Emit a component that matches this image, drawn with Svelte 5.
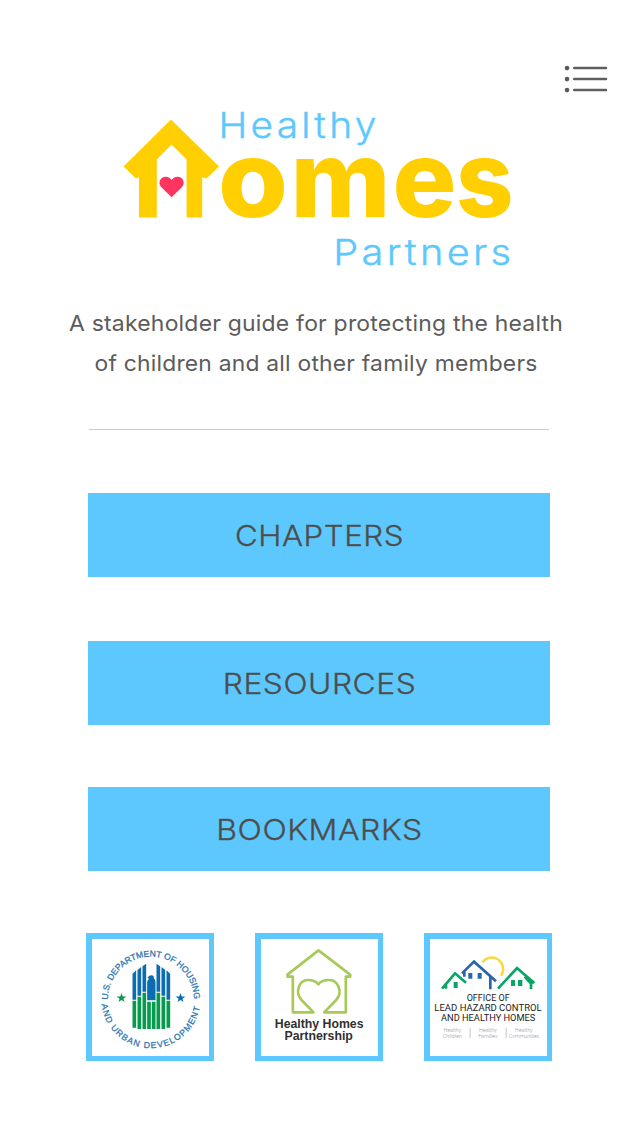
<script>
  const actions = [
    { label: 'CHAPTERS', width: 165 },
    { label: 'RESOURCES', width: 189.5 },
    { label: 'BOOKMARKS', width: 202.5 }
  ];
  const starPoints = '0,-15 3.6,-4.8 14.5,-4.6 5.8,1.9 9,12.3 0,6 -9,12.3 -5.8,1.9 -14.5,-4.6 -3.6,-4.8';
</script>

<main class="screen">
  <header class="topbar">
    <button class="menu" aria-label="Menu">
      <svg width="44" height="30" viewBox="0 0 44 30">
        {#each [4.1, 15.1, 26.1] as y}
          <circle cx="3" cy={y} r="2.3" fill="#5a5a5a" />
          <path d="M10.2 {y}H42" stroke="#5f5f5f" stroke-width="2.5" stroke-linecap="round" />
        {/each}
      </svg>
    </button>
  </header>

  <h1 class="logo">
    <svg width="400" height="180" viewBox="120 100 400 180">
      <g fill="#5dc8fd" class="thin" font-size="36">
        <text x="218.5" y="138" textLength="161" lengthAdjust="spacingAndGlyphs">Healthy</text>
        <text x="333.3" y="265" textLength="181" lengthAdjust="spacingAndGlyphs">Partners</text>
      </g>
      <path
        fill="#ffcf01"
        d="M171 119.5 219 166.5 206.5 178.6 202.2 177.2V217.6H186.6V159.6L171.5 144.5 156.8 159.6V217.6H139V177.2L136 178.4 123.5 166.5Z"
      />
      <path
        fill="#ff355f"
        d="M171.6 197.3 161.6 187.6C157.2 182.7 160.5 176.7 165.6 176.7 168.4 176.7 170.6 178.1 171.6 180 172.6 178.1 174.8 176.7 177.6 176.7 182.9 176.7 186 182.7 181.6 187.6Z"
      />
      <g fill="#ffcf01" class="heavy" font-size="106">
        <text x="218" y="217" textLength="70" lengthAdjust="spacingAndGlyphs">o</text>
        <text x="290.5" y="217" textLength="100" lengthAdjust="spacingAndGlyphs">m</text>
        <text x="392.5" y="217" textLength="64" lengthAdjust="spacingAndGlyphs">e</text>
        <text x="456" y="217" textLength="57.5" lengthAdjust="spacingAndGlyphs">s</text>
      </g>
    </svg>
  </h1>

  <svg class="tagline" width="520" height="90" viewBox="60 300 520 90">
    <text x="69" y="331" textLength="494" lengthAdjust="spacingAndGlyphs">A stakeholder guide for protecting the health</text>
    <text x="94.5" y="371" textLength="443" lengthAdjust="spacingAndGlyphs">of children and all other family members</text>
  </svg>

  <hr />

  <nav class="actions">
    {#each actions as { label, width }}
      <button class="action">
        <svg width="240" height="40" viewBox="-120 0 240 40">
          <text x={-width / 2 - 1.5} y="30.9" textLength={width + 4} lengthAdjust="spacingAndGlyphs">{label}</text>
        </svg>
      </button>
    {/each}
  </nav>

  <footer class="partners">
    <div class="tile">
      <svg viewBox="34.5 33 351 351">
        <defs>
          <path id="arc-top" d="M82 215A129 129 0 1 1 340 215" />
          <path id="arc-bottom" d="M63 229A149 149 0 0 0 359 229" />
        </defs>
        <g class="seal">
          <text><textPath href="#arc-top" textLength="404">U.S. DEPARTMENT OF HOUSING</textPath></text>
          <text><textPath href="#arc-bottom" textLength="425">AND URBAN DEVELOPMENT</textPath></text>
        </g>
        <g fill="#0b6cb0">
          <path d="M156 137 167 127V215H156ZM171 126 182 117V203H171ZM186 115 197 107V191H186ZM228 107 239 115V191H228ZM243 117 254 126V203H243ZM258 127 269 137V215H258Z" />
          <path d="M200 217V163Q200 156 206 152L201 149Q205 142 213 142 221 142 220 151 225 156 225 163V217Z" />
          <polygon points={starPoints} transform="translate(300 210)" />
        </g>
        <g fill="#079b4d">
          <path d="M156 218H167V299H156ZM171 206H182V303H171ZM186 194H197V303H186ZM200 221H211V303H200ZM214 221H225V303H214ZM228 194H239V303H228ZM243 206H254V303H243ZM258 218H269V299H258Z" />
          <polygon points={starPoints} transform="translate(123 210)" />
        </g>
      </svg>
    </div>

    <div class="tile">
      <svg viewBox="31.5 33 351 351">
        <g fill="none" stroke="#a8c957" stroke-width="8" stroke-linejoin="round" stroke-linecap="round">
          <path d="M189 253H127V146H111V140L204 67 299 140V146H286V253H221L257 216C278 192 263 156 236 156 220 156 209 161 204 169 198 161 188 156 172 156 146 156 132 192 153 216Z" />
        </g>
        <g class="condensed">
          <text x="73" y="300" textLength="266" lengthAdjust="spacingAndGlyphs">Healthy Homes</text>
          <text x="102" y="337" textLength="205" lengthAdjust="spacingAndGlyphs">Partnership</text>
        </g>
      </svg>
    </div>

    <div class="tile">
      <svg viewBox="34 33 351 351">
        <g fill="none" stroke-width="8">
          <path d="M191 103A34 34 0 1 1 247 143" stroke="#fdd835" stroke-width="7" />
          <path d="M70 182 109 136 142 164M82 168V182" stroke="#08a565" />
          <path d="M130 136 166 101 232 160M215 147V184M137 130V146" stroke="#2766ae" />
          <path d="M238 182 295 120 347 165M337 156V183M318 146 340 170" stroke="#08a565" />
        </g>
        <path fill="#08a565" d="M105 162H117V180H105ZM277 156H289V174H277ZM298 156H311V174H298Z" />
        <path fill="#2766ae" d="M149 135H161V152H149ZM177 135H189V152H177Z" />
        <g class="office">
          <text x="144" y="219" textLength="129" lengthAdjust="spacingAndGlyphs">OFFICE OF</text>
          <text x="47" y="250" textLength="322" lengthAdjust="spacingAndGlyphs">LEAD HAZARD CONTROL</text>
          <text x="67" y="280" textLength="283" lengthAdjust="spacingAndGlyphs">AND HEALTHY HOMES</text>
        </g>
        <g class="values">
          <text x="101" y="311">Healthy</text>
          <text x="101" y="330">Children</text>
          <text x="208" y="311">Healthy</text>
          <text x="208" y="330">Families</text>
          <text x="316" y="311">Healthy</text>
          <text x="316" y="330" textLength="92">Communities</text>
          <path d="M154.5 299V330M262.5 299V330" stroke="#aaa" stroke-width="2" />
        </g>
      </svg>
    </div>
  </footer>
</main>

<style>
  :global(body) {
    background: #fff;
  }
  .screen {
    width: 638px;
    height: 1134px;
    display: flex;
    flex-direction: column;
    align-items: center;
    font-family: Inter, 'Liberation Sans', sans-serif;
    overflow: hidden;
    background: #fff;
  }
  svg {
    display: block;
  }
  button {
    border: 0;
    padding: 0;
    background: none;
    font: inherit;
  }
  .topbar {
    box-sizing: border-box;
    width: 100%;
    height: 100px;
    padding: 64px 30px 0 0;
    display: flex;
    justify-content: flex-end;
    align-items: flex-start;
  }
  .logo {
    margin: 0 0 20px;
    width: 398px;
    font-size: 36px;
  }
  .thin {
    font-weight: 300;
    letter-spacing: 3px;
    stroke: #5dc8fd;
    stroke-width: 0.4px;
  }
  .heavy {
    font-weight: 800;
  }
  .tagline {
    margin-left: 2px;
    width: 520px;
    font-size: 22px;
    letter-spacing: 0.2px;
    fill: #5c5c5c;
  }
  hr {
    width: 460px;
    height: 1px;
    margin: 39px 0 63px;
    border: 0;
    background: #c6cccd;
  }
  .actions {
    display: flex;
    flex-direction: column;
  }
  .action {
    width: 462px;
    height: 84px;
    margin-bottom: 62px;
    display: flex;
    align-items: center;
    justify-content: center;
    background: #5dc8fd;
  }
  .action:first-child {
    margin-bottom: 64px;
  }
  .action svg {
    font-size: 29px;
    font-weight: 300;
    letter-spacing: 0.5px;
    fill: #4d4d4d;
    stroke: #4d4d4d;
    stroke-width: 0.3px;
  }
  .partners {
    display: flex;
    gap: 41px;
  }
  .tile {
    box-sizing: border-box;
    width: 128px;
    height: 128px;
    padding: 5.5px;
    background: #5dc8fd;
  }
  .tile svg {
    width: 117px;
    height: 117px;
    background: #fff;
  }
  .seal {
    font: 500 26px 'Liberation Sans', sans-serif;
    fill: #2a75b3;
    stroke: #2a75b3;
    stroke-width: 0.8px;
  }
  .condensed {
    font: bold 38px 'Liberation Sans', sans-serif;
    fill: #303030;
  }
  .office {
    font: 400 27px Roboto, sans-serif;
    fill: #222;
  }
  .values {
    font: 300 16px Roboto, sans-serif;
    fill: #999;
    text-anchor: middle;
  }
</style>
